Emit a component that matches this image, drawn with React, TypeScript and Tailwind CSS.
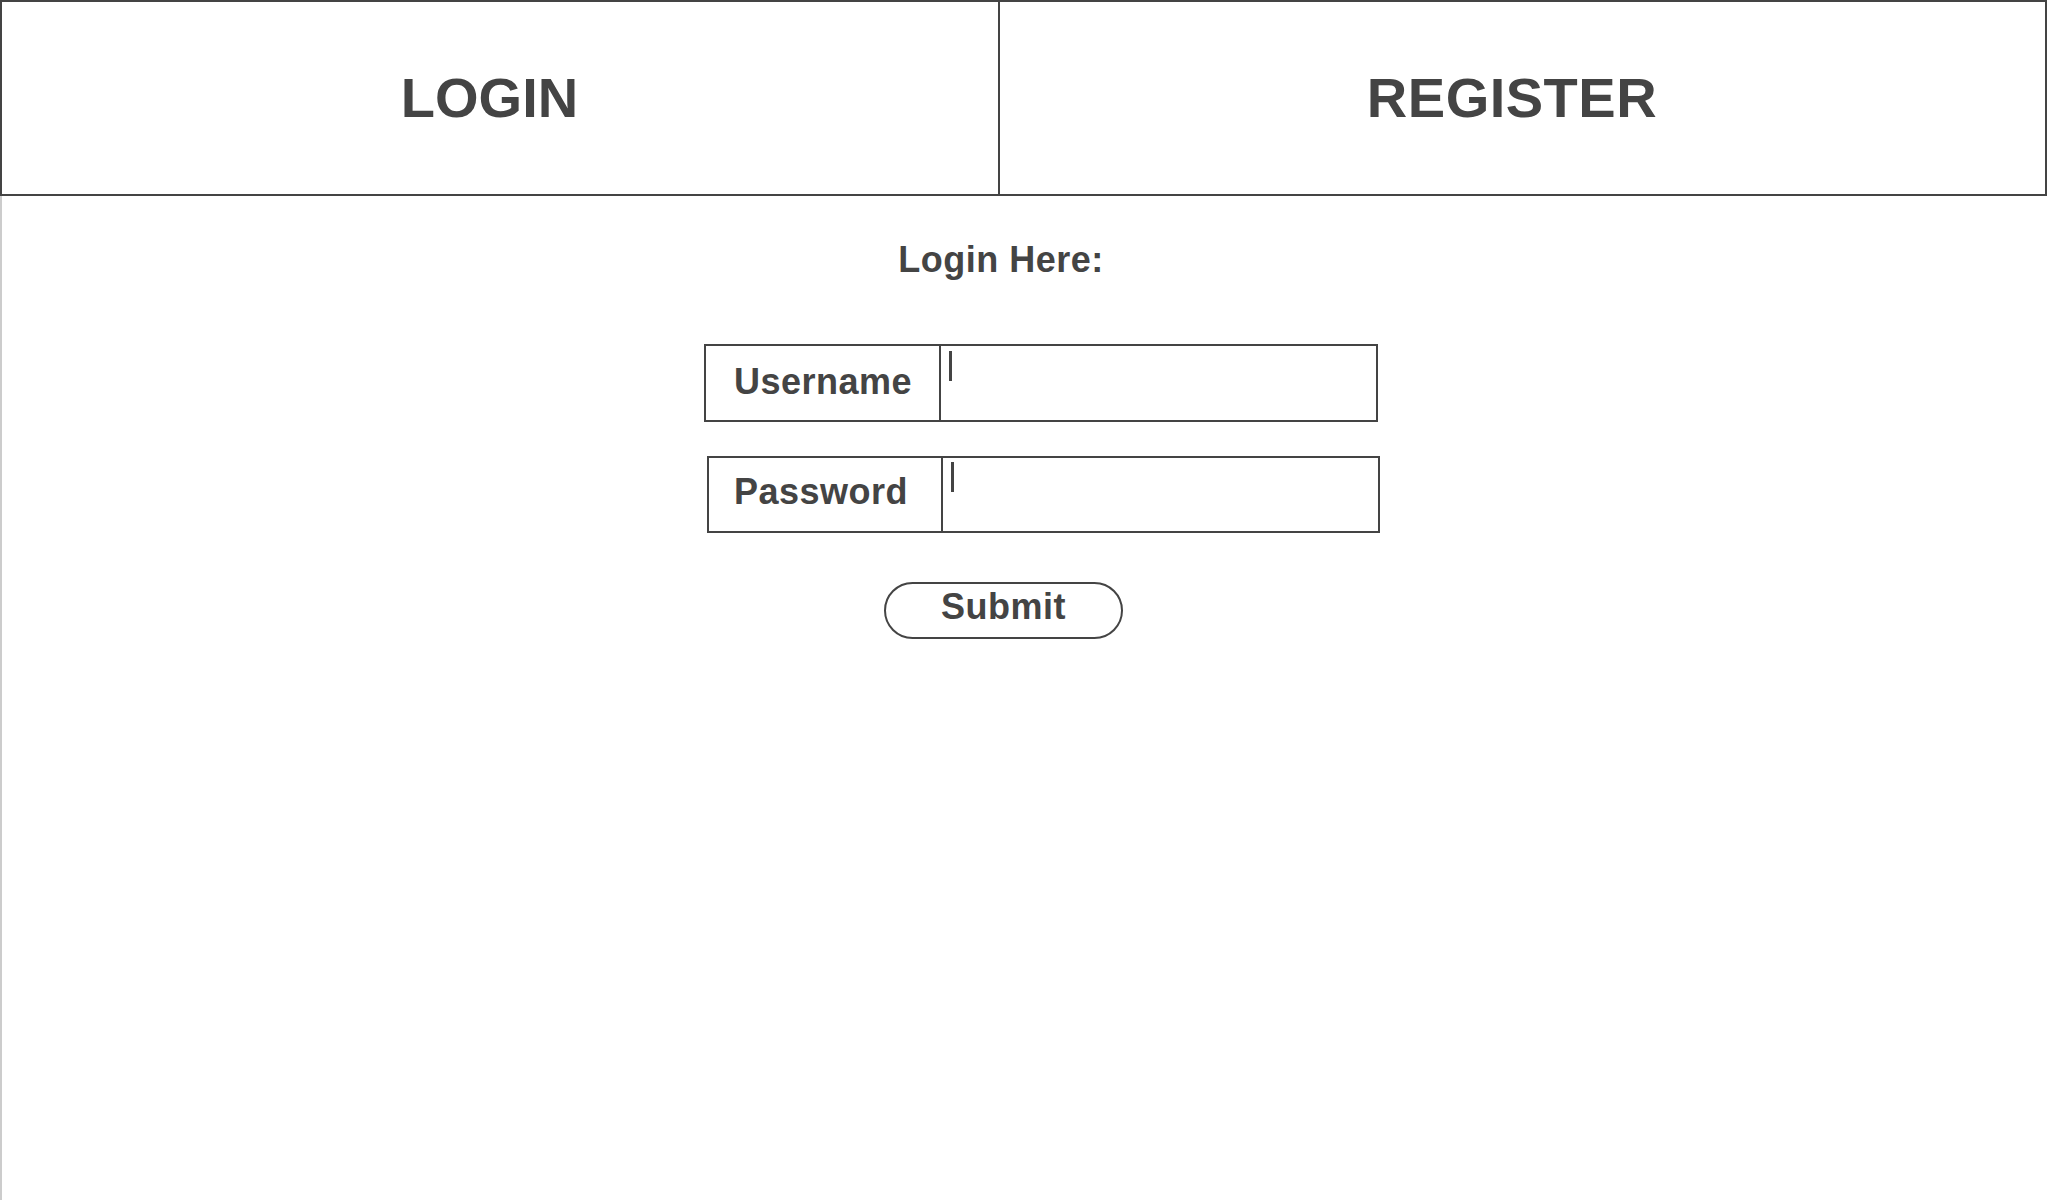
import React from "react";

function Field({ label, offset, width, labelW, h, cursorTop, pad, pb }: { label: string; offset: string; width: string; labelW: string; h: string; cursorTop: string; pad: string; pb: string }) {
  return (
    <div className={`flex border-2 border-[#444444] ${offset} ${width} ${h}`}>
      <div className={`flex items-center justify-start border-r-2 border-[#444444] ${pb} ${pad} ${labelW}`}>
        <span className="text-[36px] leading-[36px] font-bold tracking-[0.5px]">{label}</span>
      </div>
      <div className="flex-1">
        <div className={`ml-[8px] w-[3px] h-[30px] bg-[#444444] ${cursorTop}`} />
      </div>
    </div>
  );
}

export default function App() {
  return (
    <div className="flex flex-col h-[1200px] w-[2048px] bg-white text-[#444444] font-['Liberation_Sans',Arial,sans-serif] overflow-hidden">
      <header className="flex h-[196px] w-[2047px] border-2 border-[#444444] shrink-0">
        <div className="flex items-center justify-center w-[998px] border-r-2 border-[#444444] pr-[21px]">
          <span className="text-[56px] leading-[56px] font-bold">LOGIN</span>
        </div>
        <div className="flex flex-1 items-center justify-center pr-[21px]">
          <span className="text-[56px] leading-[56px] font-bold tracking-[0.5px]">REGISTER</span>
        </div>
      </header>
      <main className="flex-1 border-l-2 border-[#cccccc]">
        <div className="flex flex-col items-center w-[1998px]">
          <h1 className="mt-[46px] text-[36px] leading-[36px] font-bold tracking-[0.5px]">Login Here:</h1>
          <div className="mt-[66px]">
            <Field label="Username" offset="ml-[80px]" width="w-[674px]" labelW="w-[235px]" h="h-[78px]" cursorTop="mt-[5px]" pad="pl-[28px]" pb="pb-[2px]" />
          </div>
          <div className="mt-[34px]">
            <Field label="Password" offset="ml-[85px]" width="w-[673px]" labelW="w-[234px]" h="h-[77px]" cursorTop="mt-[4px]" pad="pl-[25px]" pb="pb-[5px]" />
          </div>
          <button className="mt-[49px] ml-[5px] flex items-center justify-center w-[239px] h-[57px] rounded-full border-2 border-[#444444] pb-[8px] bg-white">
            <span className="text-[36px] leading-[36px] font-bold tracking-[0.5px] text-[#444444]">Submit</span>
          </button>
        </div>
      </main>
    </div>
  );
}
